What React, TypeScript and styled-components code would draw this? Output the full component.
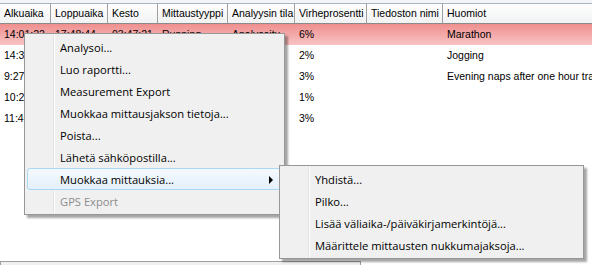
import React from 'react';
import styled, { createGlobalStyle } from 'styled-components';

const GlobalStyle = createGlobalStyle`
  html, body {
    margin: 0;
    padding: 0;
    background: #ffffff;
  }
`;

interface Column {
  title: string;
  width: number;
}

const columns: Column[] = [
  { title: 'Alkuaika', width: 51 },
  { title: 'Loppuaika', width: 57 },
  { title: 'Kesto', width: 50 },
  { title: 'Mittaustyyppi', width: 70 },
  { title: 'Analyysin tila', width: 67 },
  { title: 'Virheprosentti', width: 72 },
  { title: 'Tiedoston nimi', width: 76 },
  { title: 'Huomiot', width: 200 }
];

const rows: string[][] = [
  ['14:01:22', '17:48:44', '03:47:21', 'Running', 'Analysoitu', '6%', '', 'Marathon'],
  ['14:32:10', '15:21:05', '00:48:55', 'Running', 'Analysoitu', '2%', '', 'Jogging'],
  ['9:27:41', '10:31:12', '01:03:31', 'Sleep', 'Analysoitu', '3%', '', 'Evening naps after one hour training'],
  ['10:25:03', '11:02:47', '00:37:44', 'Running', 'Analysoitu', '1%', '', ''],
  ['11:40:19', '12:15:30', '00:35:11', 'Running', 'Analysoitu', '3%', '', '']
];

const mainItems = [
  { label: 'Analysoi...' },
  { label: 'Luo raportti...' },
  { label: 'Measurement Export' },
  { label: 'Muokkaa mittausjakson tietoja...' },
  { label: 'Poista...' },
  { label: 'Lähetä sähköpostilla...' },
  { label: 'Muokkaa mittauksia...', active: true, submenu: true },
  { label: 'GPS Export', disabled: true }
];

const subItems = [
  'Yhdistä...',
  'Pilko...',
  'Lisää väliaika-/päiväkirjamerkintöjä...',
  'Määrittele mittausten nukkumajaksoja...'
];

const Page = styled.div`
  position: relative;
  width: 592px;
  height: 265px;
  overflow: hidden;
  display: flex;
  flex-direction: column;
  font-family: Tahoma, "Liberation Sans", Arial, sans-serif;
  font-size: 10.5px;
  color: #000;
`;

const HeaderBar = styled.div`
  display: flex;
  height: 20px;
  border-top: 3px solid #f2f4f7;
  box-shadow: inset 0 1px 0 #a9b4c2;
  border-bottom: 1px solid #8a8a8a;
  background: linear-gradient(#ffffff, #f1f2f3);
  white-space: nowrap;
`;

const HeaderCell = styled.div<{ $w: number }>`
  flex: 0 0 ${(p) => p.$w}px;
  box-sizing: border-box;
  padding: 1px 0 0 4px;
  line-height: 19px;
  border-right: 1px solid #a0a0a0;
  box-shadow: inset 0 1px 0 #a9b4c2;
  overflow: hidden;
`;

const Row = styled.div<{ $selected?: boolean }>`
  display: flex;
  height: 21px;
  white-space: nowrap;
  background: ${(p) => (p.$selected ? 'linear-gradient(#ef8f8f, #f9c3c3)' : '#ffffff')};
`;

const Cell = styled.div<{ $w: number }>`
  flex: 0 0 ${(p) => p.$w}px;
  box-sizing: border-box;
  padding-left: 4px;
  line-height: 20px;
  overflow: hidden;
`;

const Filler = styled.div`
  flex: 1;
`;

const ScrollTrack = styled.div`
  width: 359px;
  height: 3px;
  border: 1px solid #a0a0a0;
  border-bottom: none;
  background: #f0f0f0;
`;

const Menu = styled.div<{ $left: number; $top: number; $width: number; $gutter: number }>`
  position: absolute;
  left: ${(p) => p.$left}px;
  top: ${(p) => p.$top}px;
  width: ${(p) => p.$width}px;
  box-sizing: border-box;
  padding: 2px;
  background: #f0f0f0;
  border: 1px solid #979797;
  box-shadow: 3px 3px 2px rgba(0, 0, 0, 0.35);
  font-family: "Segoe UI", "Open Sans", sans-serif;
  font-size: 11.2px;
  background-image: linear-gradient(90deg, transparent ${(p) => p.$gutter}px, #e2e3e3 ${(p) => p.$gutter}px, #e2e3e3 ${(p) => p.$gutter + 1}px, #ffffff ${(p) => p.$gutter + 1}px, #ffffff ${(p) => p.$gutter + 2}px, transparent ${(p) => p.$gutter + 2}px);
`;

const Item = styled.div<{ $active?: boolean; $disabled?: boolean; $indent: number }>`
  position: relative;
  height: 22px;
  box-sizing: border-box;
  padding-left: ${(p) => p.$indent}px;
  line-height: 21px;
  white-space: nowrap;
  color: ${(p) => (p.$disabled ? '#8d8d8d' : '#000')};
  border: 1px solid ${(p) => (p.$active ? '#a8d8f5' : 'transparent')};
  border-radius: 3px;
  background: ${(p) => (p.$active ? 'linear-gradient(#f4f9fd, #e4f0fb)' : 'transparent')};
`;

const Arrow = styled.span`
  position: absolute;
  right: 8px;
  top: 7px;
  width: 0;
  height: 0;
  border-top: 4px solid transparent;
  border-bottom: 4px solid transparent;
  border-left: 4px solid #000;
`;

export default function App() {
  return (
    <Page>
      <GlobalStyle />
      <HeaderBar>
        {columns.map((c) => (
          <HeaderCell key={c.title} $w={c.width}>{c.title}</HeaderCell>
        ))}
      </HeaderBar>
      {rows.map((r, i) => (
        <Row key={i} $selected={i === 0}>
          {r.map((v, j) => (
            <Cell key={j} $w={columns[j].width}>{v}</Cell>
          ))}
        </Row>
      ))}
      <Filler />
      <ScrollTrack />

      <Menu $left={24} $top={33} $width={261} $gutter={28}>
        {mainItems.map((m) => (
          <Item key={m.label} $active={m.active} $disabled={m.disabled} $indent={32}>
            {m.label}
            {m.submenu && <Arrow />}
          </Item>
        ))}
      </Menu>

      <Menu $left={279} $top={165} $width={305} $gutter={28}>
        {subItems.map((s) => (
          <Item key={s} $indent={32}>{s}</Item>
        ))}
      </Menu>
    </Page>
  );
}
